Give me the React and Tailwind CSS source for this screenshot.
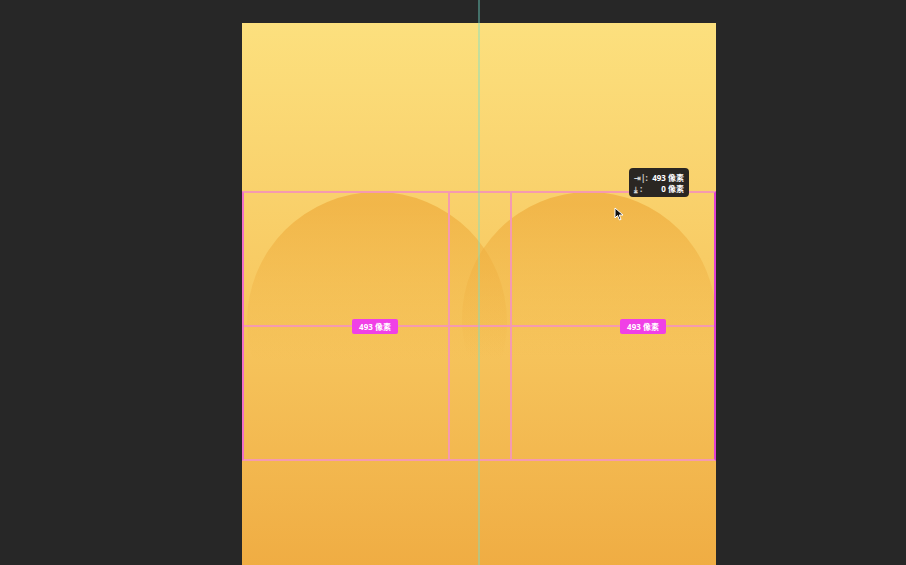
export default function App() {
  return (
    <div className="relative w-[906px] h-[565px] overflow-hidden bg-[#272727]" style={{ fontFamily: '"Noto Sans", "Noto Sans CJK SC", sans-serif' }}>
      <div className="relative ml-[242px] mt-[23px] w-[474px] h-[560px] overflow-hidden bg-gradient-to-b from-[#fce07e] via-[#f7c860] to-[#efab41] flex flex-col">
        {/* circles */}
        <div className="absolute left-[5px] top-[169px] w-[260px] h-[260px] rounded-full bg-gradient-to-b from-[#efae3f]/75 from-5% to-transparent to-65%" />
        <div className="absolute left-[220px] top-[169px] w-[254px] h-[254px] rounded-full bg-gradient-to-b from-[#efae3f]/75 from-5% to-transparent to-65%" />
        <div className="h-[168px] shrink-0" />
        {/* selection box */}
        <div className="relative z-10 h-[270px] shrink-0 border-2 border-[#f59ab0] border-l-[#f070c8] border-r-[#e040d4] flex">
          <div className="w-[206px] border-r-2 border-[#f59ab0]" />
          <div className="w-[62px] border-r-2 border-[#f59ab0]" />
          <div className="flex-1" />
          <div className="absolute left-0 right-0 top-[132px] h-[2px] bg-[#f59ab0]" />
          <div className="absolute left-[108px] top-[126px] w-[46px] h-[15px] rounded-[2px] bg-[#f040e6] flex items-center justify-center text-white text-[8px] font-bold leading-none">493 像素</div>
          <div className="absolute left-[376px] top-[126px] w-[46px] h-[15px] rounded-[2px] bg-[#f040e6] flex items-center justify-center text-white text-[8px] font-bold leading-none">493 像素</div>
        </div>
      </div>
      {/* cyan guide */}
      <div className="absolute z-20 left-[478px] top-0 w-[2px] h-[565px] bg-[#70e0d0]/40" />
      {/* tooltip */}
      <div className="absolute z-30 left-[629px] top-[168px] w-[60px] h-[29px] rounded-[4px] bg-[#2a2622] px-[5px] flex flex-col justify-center text-white text-[8px] font-bold leading-[11px]">
        <div className="flex justify-between"><span className="text-white/80">⇥|:</span><span>493 像素</span></div>
        <div className="flex justify-between"><span className="text-white/80">⤓ :</span><span>0 像素</span></div>
      </div>
      {/* cursor */}
      <svg className="absolute z-30 left-[614px] top-[207px]" width="12" height="14" viewBox="0 0 12 14">
        <path d="M1 1 L1 11 L3.5 8.5 L5.5 13 L7 12.4 L5.2 8 L9 8 Z" fill="#111" stroke="#fff" strokeWidth="1" />
      </svg>
    </div>
  );
}
